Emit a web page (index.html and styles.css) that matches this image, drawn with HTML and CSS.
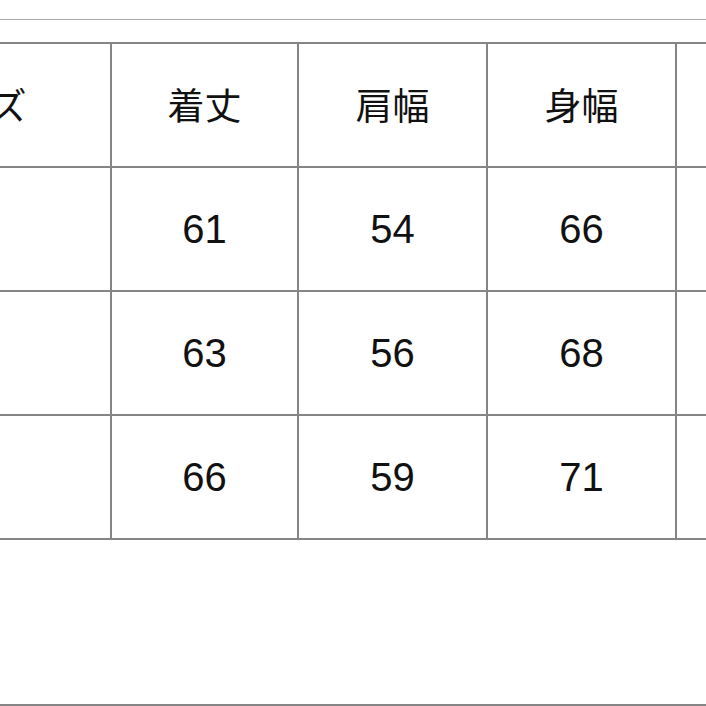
FILE: index.html
```html
<!DOCTYPE html>
<html lang="ja">
<head>
<meta charset="utf-8">
<title>サイズ表</title>
<link rel="stylesheet" href="styles.css">
</head>
<body>
<div class="page">
  <div class="topbar"></div>
  <div class="sheet">
    <div class="grid">
      <div class="cell head">サイズ</div>
      <div class="cell head">着丈</div>
      <div class="cell head">肩幅</div>
      <div class="cell head">身幅</div>
      <div class="cell head"></div>

      <div class="cell"></div>
      <div class="cell num">61</div>
      <div class="cell num">54</div>
      <div class="cell num">66</div>
      <div class="cell num"></div>

      <div class="cell"></div>
      <div class="cell num">63</div>
      <div class="cell num">56</div>
      <div class="cell num">68</div>
      <div class="cell num"></div>

      <div class="cell"></div>
      <div class="cell num">66</div>
      <div class="cell num">59</div>
      <div class="cell num">71</div>
      <div class="cell num"></div>
    </div>
  </div>
  <div class="bottombar"></div>
</div>
</body>
</html>
```
FILE: styles.css
```css
html, body {
  margin: 0;
  padding: 0;
  background: #ffffff;
}
body {
  width: 706px;
  height: 706px;
  overflow: hidden;
}
.page {
  display: flex;
  flex-direction: column;
  height: 706px;
  overflow: hidden;
}
.topbar {
  height: 19px;
  border-bottom: 1px solid #adadad;
  flex: none;
}
.sheet {
  margin-top: 22px;
  margin-left: -169px;
  flex: none;
}
.grid {
  display: grid;
  grid-template-columns: 277px 185px 187px 187px 185px;
  grid-auto-rows: 122px;
  gap: 2px;
  padding: 2px;
  background: #858585;
  width: max-content;
}
.cell {
  background: #ffffff;
  display: flex;
  align-items: center;
  justify-content: center;
  color: #111111;
}
.head {
  font-family: "Noto Sans CJK JP", "Noto Sans", sans-serif;
  font-size: 37px;
  font-weight: 400;
  padding-bottom: 2px;
}
.num {
  font-family: "Liberation Sans", Arial, sans-serif;
  font-size: 40px;
}
.bottombar {
  margin-top: auto;
  height: 0;
  border-top: 2px solid #858585;
  flex: none;
}
```
